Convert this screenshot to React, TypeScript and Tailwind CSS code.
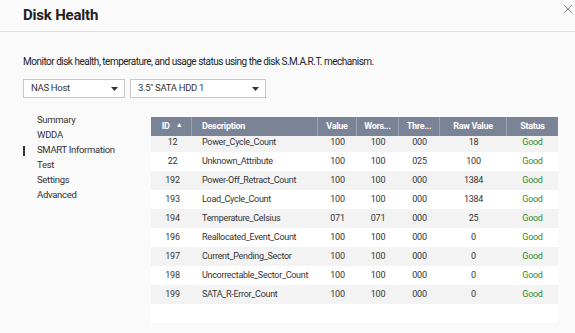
import React from "react";

const rows = [
  ["12", "Power_Cycle_Count", "100", "100", "000", "18"],
  ["22", "Unknown_Attribute", "100", "100", "025", "100"],
  ["192", "Power-Off_Retract_Count", "100", "100", "000", "1384"],
  ["193", "Load_Cycle_Count", "100", "100", "000", "1384"],
  ["194", "Temperature_Celsius", "071", "071", "000", "25"],
  ["196", "Reallocated_Event_Count", "100", "100", "000", "0"],
  ["197", "Current_Pending_Sector", "100", "100", "000", "0"],
  ["198", "Uncorrectable_Sector_Count", "100", "100", "000", "0"],
  ["199", "SATA_R-Error_Count", "100", "100", "000", "0"],
];

const nav = ["Summary", "WDDA", "SMART Information", "Test", "Settings", "Advanced"];

function Caret() {
  return (
    <svg width="7" height="4" viewBox="0 0 7 4">
      <path d="M0 0H7L3.5 4Z" fill="#333" />
    </svg>
  );
}

export default function App() {
  return (
    <div
      className="w-[575px] h-[333px] bg-[#fafafa] relative overflow-hidden text-[#333]"
      style={{ fontFamily: "Roboto, 'Noto Sans', sans-serif" }}
    >
      <div className="h-[32px] border-b border-[#dedede] flex items-center pl-[23px]">
        <span className="text-[15px] font-bold text-[#222] leading-none tracking-[-0.2px]">Disk Health</span>
      </div>
      <svg className="absolute left-[563px] top-[4px]" width="10" height="10" viewBox="0 0 10 10">
        <path d="M1 1L9 9M9 1L1 9" stroke="#888" strokeWidth="1" />
      </svg>
      <div className="pl-[23px] pt-[24px] text-[10px] leading-[12px] text-[#222] tracking-[-0.5px]">
        Monitor disk health, temperature, and usage status using the disk S.M.A.R.T. mechanism.
      </div>
      <div className="pl-[23px] pt-[11px] flex gap-[5px]">
        <div className="w-[102px] h-[19px] border border-[#c8c8c8] bg-white flex items-center justify-between pl-[7px] pr-[6px] text-[9.5px] tracking-[-0.3px]">
          <span>NAS Host</span>
          <Caret />
        </div>
        <div className="w-[136px] h-[19px] border border-[#c8c8c8] bg-white flex items-center justify-between pl-[7px] pr-[6px] text-[9.5px] tracking-[-0.3px]">
          <span>3.5" SATA HDD 1</span>
          <Caret />
        </div>
      </div>
      <div className="flex pt-[15px] items-start">
        <div className="w-[151px] pl-[23px] flex flex-col">
          {nav.map((n, i) => (
            <div key={n} className="h-[15px] flex items-center text-[9.5px] text-[#333] tracking-[-0.3px]">
              <div className={`w-[2px] h-[10px] mr-[12px] ${i === 2 ? "bg-[#333]" : ""}`} />
              <span>{n}</span>
            </div>
          ))}
        </div>
        <div className="w-[407px] bg-white h-[206px] mt-[4px]">
          <div className="h-[19px] bg-[#7b8396] flex text-white text-[9px] font-bold tracking-[-0.3px]">
            <div className="w-[41px] flex items-center justify-center gap-[6px] border-r border-[#9aa1b0] pl-[2px]">
              <span>ID</span>
              <span className="text-[7px] leading-none -mt-[3px]">▲</span>
            </div>
            <div className="w-[126px] flex items-center pl-[10px] border-r border-[#9aa1b0]">Description</div>
            <div className="w-[39px] flex items-center justify-center border-r border-[#9aa1b0]">Value</div>
            <div className="w-[42px] flex items-center justify-center border-r border-[#9aa1b0]">Wors...</div>
            <div className="w-[41px] flex items-center justify-center border-r border-[#9aa1b0]">Thre...</div>
            <div className="w-[67px] flex items-center justify-center border-r border-[#9aa1b0]">Raw Value</div>
            <div className="flex-1 flex items-center justify-center">Status</div>
          </div>
          <div className="h-[168px] overflow-hidden">
            <div className="-mt-[3px]">
              {rows.map((r, i) => (
                <div key={r[0]} className={`h-[19px] flex items-center text-[9px] tracking-[-0.3px] ${i % 2 === 0 ? "bg-[#f3f3f3]" : "bg-white"}`}>
                  <div className="w-[41px] text-center pl-[2px]">{r[0]}</div>
                  <div className="w-[126px] pl-[10px]">{r[1]}</div>
                  <div className="w-[39px] text-center">{r[2]}</div>
                  <div className="w-[42px] text-center">{r[3]}</div>
                  <div className="w-[41px] text-center">{r[4]}</div>
                  <div className="w-[67px] text-center">{r[5]}</div>
                  <div className="flex-1 text-center text-[#2e8b2e]">Good</div>
                </div>
              ))}
            </div>
          </div>
        </div>
      </div>
    </div>
  );
}
